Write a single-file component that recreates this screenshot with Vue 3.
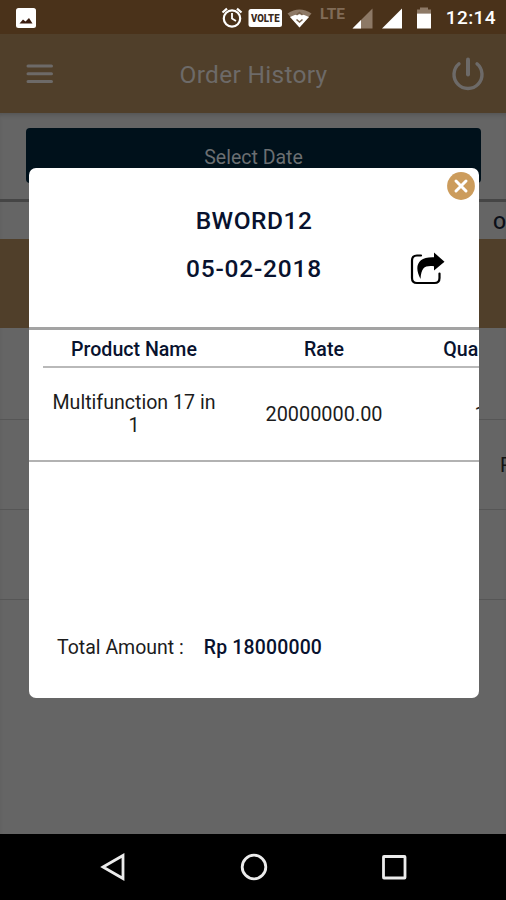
<script setup>
import { ref } from 'vue'

const order = ref({
  id: 'BWORD12',
  date: '05-02-2018',
  total: 'Rp 18000000',
  products: [{ name: 'Multifunction 17 in 1', rate: '20000000.00', qty: '1' }]
})

const history = ['', 'Rp', '']
</script>

<template>
  <div class="screen">
    <div class="status-bar">
      <svg class="photo" width="20" height="20" viewBox="0 0 20 20">
        <rect width="20" height="20" rx="2.5" fill="#fff" />
        <path d="M3.500 15.500l3.500-4 2.500 2 3.500-3.500 3.500 5.500z" fill="#3a1d10" />
      </svg>
      <svg class="status-icons" width="216" height="24" viewBox="0 0 216 24">
        <g fill="none" stroke="#fff" stroke-width="2.2">
          <circle cx="12" cy="13.500" r="8.2" />
          <path d="M2.500 7.500L7 3.600M21.500 7.500L17 3.600" />
          <path d="M12 8v5.500l4 2.400" stroke-width="1.8" />
        </g>
        <rect x="28.500" y="4" width="33.500" height="18" rx="2.5" fill="#fff" />
        <text x="31" y="16.800" class="volte" textLength="28.500" lengthAdjust="spacingAndGlyphs">VOLTE</text>
        <path d="M67.500 8.500Q79.500 0.500 91.500 8.500L79.500 22.500z" fill="#8d7966" />
        <path d="M70 12Q79.500 6.500 89 12L79.500 22.500z" fill="#fff" />
        <path d="M76.500 10l3-2.500 3 2.500M76.500 14.500l3 2.500 3-2.500" fill="none" stroke="#77614c" stroke-width="1.6" />
        <text x="100" y="13.500" class="lte" textLength="25" lengthAdjust="spacingAndGlyphs">LTE</text>
        <path d="M132.500 23.500l20-20v20z" fill="#8d7966" />
        <path d="M132.500 23.500l8.500-8.500v8.500z" fill="#fff" />
        <path d="M162 23.500l20-20v20z" fill="#fff" />
        <path d="M197 8.500V4.500h3V2.500h8v2h3V8.500z" fill="#8d7966" />
        <rect x="197" y="8.500" width="14" height="15" fill="#fff" />
      </svg>
      <span class="clock">12:14</span>
    </div>

    <header class="toolbar">
      <svg width="28" height="20" viewBox="0 0 28 20">
        <path d="M2 2h23.500M2 9.700h23.500M2 17.400h23.500" stroke="#6d6a68" stroke-width="3" stroke-linecap="round" />
      </svg>
      <h1>Order History</h1>
      <svg width="34" height="34" viewBox="0 0 34 34" fill="none" stroke="#6d6a68" stroke-width="3.400" stroke-linecap="round">
        <path d="M17 2.500v15" stroke-width="4" />
        <path d="M8 6.800A14 14 0 1 0 26 6.800" />
      </svg>
    </header>

    <main class="page">
      <div class="select-date">Select Date</div>
      <div class="head-row">Order</div>
      <div class="active-row"></div>
      <div v-for="(item, i) in history" :key="i" class="history-row">{{ item }}</div>
    </main>

    <nav class="nav-bar">
      <svg width="28" height="30" viewBox="0 0 28 30">
        <path d="M4 15L24 3.500v23z" />
      </svg>
      <svg width="28" height="30" viewBox="0 0 28 30">
        <circle cx="14" cy="15" r="11.800" />
      </svg>
      <svg width="28" height="30" viewBox="0 0 28 30">
        <rect x="3.500" y="4.500" width="21.500" height="21.500" rx="0.500" />
      </svg>
    </nav>

    <section class="modal">
      <svg class="close" width="28" height="28" viewBox="0 0 28 28">
        <circle cx="14" cy="14" r="13.900" fill="#cc9c5c" />
        <path d="M9 9l10 10M19 9L9 19" stroke="#fff" stroke-width="3" stroke-linecap="round" />
      </svg>
      <div class="summary">
        <h2>{{ order.id }}</h2>
        <h2 class="date">{{ order.date }}</h2>
        <svg class="share" width="36" height="34" viewBox="0 0 36 34">
          <path d="M11 3.500H7Q2 3.500 2 8.500v17.500Q2 31 7 31h17.500Q29.500 31 29.500 26V21.500" fill="none" stroke="#000" stroke-width="2.200" stroke-linecap="round" />
          <path d="M24 0.500l10.500 9.200L24 18.500v-4.200C15 13.500 11.500 15 10.500 27 4 15 7 4.500 24 5.200z" fill="#000" />
        </svg>
      </div>
      <div class="table">
        <div class="row head">
          <span>Product Name</span>
          <span>Rate</span>
          <span>Quantity</span>
        </div>
        <div v-for="p in order.products" :key="p.name" class="row">
          <span class="name">{{ p.name }}</span>
          <span>{{ p.rate }}</span>
          <span>{{ p.qty }}</span>
        </div>
      </div>
      <div class="total">
        <span class="label">Total Amount :</span>
        <strong>{{ order.total }}</strong>
      </div>
    </section>
  </div>
</template>

<style>
body {
  margin: 0;
  background: #000;
}
</style>

<style scoped>
.screen {
  position: relative;
  display: flex;
  flex-direction: column;
  width: 506px;
  height: 900px;
  overflow: hidden;
  font-family: Roboto, sans-serif;
  background: #656565;
}

.status-bar {
  display: flex;
  align-items: center;
  box-sizing: border-box;
  height: 34px;
  padding: 0 10px 0 16px;
  background: #4a321a;
}

.photo {
  margin-top: 1px;
}

.status-icons {
  margin-left: 184px;
}

.volte {
  font-size: 10px;
  font-weight: 900;
  fill: #3a2a1c;
}

.lte {
  font-size: 15px;
  font-weight: 700;
  fill: #806b57;
}

.clock {
  margin: 1px 0 0 auto;
  color: #fff;
  font-size: 19px;
  font-weight: 500;
  letter-spacing: 0.4px;
  white-space: nowrap;
}

.toolbar {
  display: flex;
  align-items: center;
  justify-content: space-between;
  box-sizing: border-box;
  height: 79px;
  padding: 0 21px 0 26px;
  background: #503f2a;
}

.toolbar h1 {
  margin: 1px 0 0 2px;
  color: #6d6a68;
  font-size: 24.5px;
  font-weight: 400;
  letter-spacing: 0.3px;
}

.page {
  flex: 1;
  padding-top: 15px;
  box-shadow: inset 0 4px 4px -2px #555;
}

.select-date {
  width: 455px;
  height: 55px;
  margin-left: 26px;
  border-radius: 4px;
  background: #00111b;
  color: #6b6f72;
  font-size: 19.5px;
  line-height: 59px;
  text-align: center;
}

.head-row {
  height: 37px;
  margin-top: 16px;
  padding-left: 493px;
  border-top: 3px solid #454545;
  color: #0b0f18;
  font-size: 19px;
  font-weight: 500;
  line-height: 41px;
}

.active-row {
  height: 89px;
  background: #503f2a;
}

.history-row {
  box-sizing: border-box;
  height: 90px;
  padding-left: 500px;
  border-bottom: 1px solid #565656;
  color: #141414;
  font-size: 20px;
  line-height: 90px;
  white-space: nowrap;
}

.history-row:nth-last-child(3) {
  height: 92px;
}

.nav-bar {
  display: flex;
  align-items: center;
  justify-content: space-between;
  box-sizing: border-box;
  height: 66px;
  padding: 0 98px 0 99px;
  background: #000;
}

.nav-bar svg {
  fill: none;
  stroke: #ececec;
  stroke-width: 2.8;
}

.modal {
  position: absolute;
  top: 168px;
  left: 29px;
  display: flex;
  flex-direction: column;
  width: 450px;
  height: 530px;
  overflow: hidden;
  border-radius: 7px;
  background: #fff;
  color: #08122e;
}

.close {
  position: absolute;
  top: 4px;
  right: 4px;
}

.summary {
  position: relative;
  box-sizing: border-box;
  height: 162px;
  padding-top: 29px;
  border-bottom: 3px solid #a3a3a3;
  text-align: center;
}

.summary h2 {
  margin: 0;
  font-size: 24.5px;
  font-weight: 550;
  line-height: 48px;
  letter-spacing: 0.5px;
}

.summary .date {
  letter-spacing: 0.8px;
}

.share {
  position: absolute;
  top: 84px;
  right: 33px;
}

.table {
  border-bottom: 2px solid #b2b2b2;
}

.row {
  display: grid;
  grid-template-columns: 182px 198px 114px;
  align-items: center;
  width: 494px;
  height: 92px;
  margin-left: 14px;
  color: #1c1c1c;
  font-size: 19.9px;
  line-height: 23px;
  text-align: center;
}

.name {
  padding: 0 6px;
  font-size: 19.6px;
}

.row.head {
  box-sizing: border-box;
  height: 38px;
  padding-top: 3px;
  border-bottom: 2px solid #b9b9b9;
  color: #08122e;
  font-size: 19.6px;
  font-weight: 550;
}

.total {
  display: flex;
  margin: auto 0 39px 28px;
  gap: 20px;
  font-size: 19.5px;
  line-height: 23px;
}

.total .label {
  color: #1c1c1c;
}

.total strong {
  font-size: 19.4px;
  font-weight: 550;
  letter-spacing: 0.2px;
}
</style>
